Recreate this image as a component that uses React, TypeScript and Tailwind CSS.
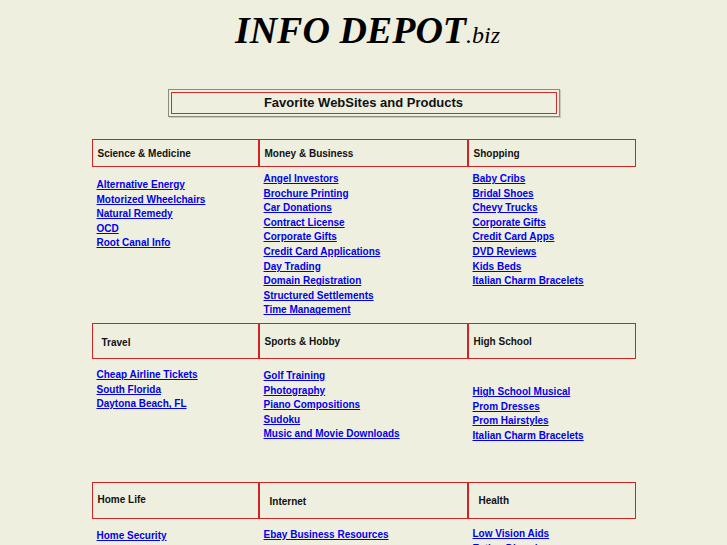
import React from 'react';

type Cell = {
  title: string;
  headPad?: string;
  bodyPad: string;
  links: string[];
};

type Row = {
  headH: string;
  bodyH: string;
  cells: Cell[];
};

const rows: Row[] = [
  {
    headH: 'h-[28px]',
    bodyH: 'h-[156px]',
    cells: [
      {
        title: 'Science & Medicine',
        bodyPad: 'pt-[11px]',
        links: ['Alternative Energy', 'Motorized Wheelchairs', 'Natural Remedy', 'OCD', 'Root Canal Info'],
      },
      {
        title: 'Money & Business',
        bodyPad: 'pt-[5px]',
        links: [
          'Angel Investors',
          'Brochure Printing',
          'Car Donations',
          'Contract License',
          'Corporate Gifts',
          'Credit Card Applications',
          'Day Trading',
          'Domain Registration',
          'Structured Settlements',
          'Time Management',
        ],
      },
      {
        title: 'Shopping',
        bodyPad: 'pt-[5px]',
        links: [
          'Baby Cribs',
          'Bridal Shoes',
          'Chevy Trucks',
          'Corporate Gifts',
          'Credit Card Apps',
          'DVD Reviews',
          'Kids Beds',
          'Italian Charm Bracelets',
        ],
      },
    ],
  },
  {
    headH: 'h-[36px]',
    bodyH: 'h-[123px]',
    cells: [
      {
        title: 'Travel',
        headPad: 'pl-[9px] pt-[2px]',
        bodyPad: 'pt-[9px]',
        links: ['Cheap Airline Tickets', 'South Florida', 'Daytona Beach, FL'],
      },
      {
        title: 'Sports & Hobby',
        bodyPad: 'pt-[10px]',
        links: ['Golf Training', 'Photography', 'Piano Compositions', 'Sudoku', 'Music and Movie Downloads'],
      },
      {
        title: 'High School',
        bodyPad: 'pt-[26px]',
        links: ['High School Musical', 'Prom Dresses', 'Prom Hairstyles', 'Italian Charm Bracelets'],
      },
    ],
  },
  {
    headH: 'h-[37px]',
    bodyH: 'h-[80px]',
    cells: [
      {
        title: 'Home Life',
        headPad: 'pb-[3px]',
        bodyPad: 'pt-[10px]',
        links: ['Home Security', 'Interior Design', 'Kitchen Cabinets'],
      },
      {
        title: 'Internet',
        headPad: 'pl-[10px] pt-[1px]',
        bodyPad: 'pt-[9px]',
        links: ['Ebay Business Resources', 'Web Hosting', 'Domain Names'],
      },
      {
        title: 'Health',
        headPad: 'pl-[10px]',
        bodyPad: 'pt-[8px]',
        links: ['Low Vision Aids', 'Eating Disorders', 'Hair Loss'],
      },
    ],
  },
];

const colW = ['w-[167px]', 'w-[209px]', 'w-[168px]'];

export default function App() {
  return (
    <div className="h-[545px] w-full overflow-hidden bg-[#efefe0] font-['Liberation_Sans',Arial,sans-serif]">
      <div className="flex justify-center pt-[5px] pl-[8px]">
        <h1 className="font-['Liberation_Serif','Times_New_Roman',serif] text-[38px] font-bold italic leading-[50px] text-black">
          INFO DEPOT
          <span className="text-[24px] font-normal">.biz</span>
        </h1>
      </div>

      <div className="mt-[29px] flex justify-center">
        <div className="w-[392px] border border-[#8a8a80] p-[2px] shadow-[1px_1px_0_#c8c8bc]">
          <div className="flex h-[22px] items-center justify-center border border-[#d42a2a] text-[13px] font-bold text-[#111]">
            Favorite WebSites and Products
          </div>
        </div>
      </div>

      <div className="mt-[22px] flex justify-center">
        <div className="flex w-[544px] flex-col">
          {rows.map((row, ri) => (
            <div key={ri} className="flex flex-col">
              <div className="flex">
                {row.cells.map((cell, ci) => (
                  <div
                    key={ci}
                    className={`${colW[ci]} ${row.headH} flex items-center border border-[#d02424] pl-[5px] text-[10px] font-bold text-[#111] ${cell.headPad ?? ''}`}
                  >
                    {cell.title}
                  </div>
                ))}
              </div>
              <div className={`flex ${row.bodyH} overflow-hidden`}>
                {row.cells.map((cell, ci) => (
                  <div key={ci} className={`${colW[ci]} flex flex-col pl-[5px] ${cell.bodyPad}`}>
                    {cell.links.map((l) => (
                      <a
                        key={l}
                        href="#"
                        className="self-start text-[10px] leading-[14.6px] font-bold text-[#0000ee] underline"
                      >
                        {l}
                      </a>
                    ))}
                  </div>
                ))}
              </div>
            </div>
          ))}
        </div>
      </div>
    </div>
  );
}
